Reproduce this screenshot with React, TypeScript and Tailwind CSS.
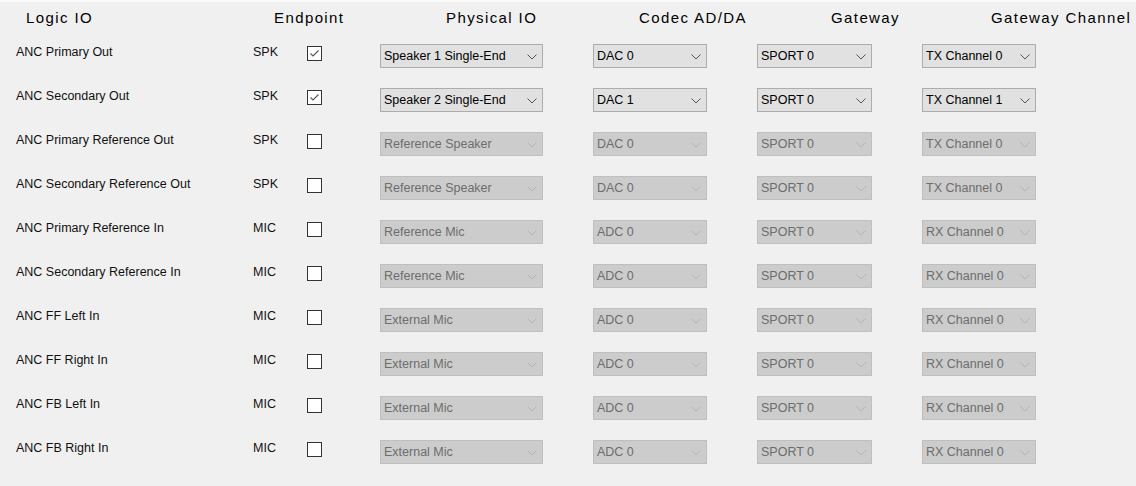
import React from "react";

type Row = {
  name: string;
  ep: string;
  checked: boolean;
  phys: string;
  codec: string;
  gw: string;
  ch: string;
};

const rows: Row[] = [
  { name: "ANC Primary Out", ep: "SPK", checked: true, phys: "Speaker 1 Single-End", codec: "DAC 0", gw: "SPORT 0", ch: "TX Channel 0" },
  { name: "ANC Secondary Out", ep: "SPK", checked: true, phys: "Speaker 2 Single-End", codec: "DAC 1", gw: "SPORT 0", ch: "TX Channel 1" },
  { name: "ANC Primary Reference Out", ep: "SPK", checked: false, phys: "Reference Speaker", codec: "DAC 0", gw: "SPORT 0", ch: "TX Channel 0" },
  { name: "ANC Secondary Reference Out", ep: "SPK", checked: false, phys: "Reference Speaker", codec: "DAC 0", gw: "SPORT 0", ch: "TX Channel 0" },
  { name: "ANC Primary Reference In", ep: "MIC", checked: false, phys: "Reference Mic", codec: "ADC 0", gw: "SPORT 0", ch: "RX Channel 0" },
  { name: "ANC Secondary Reference In", ep: "MIC", checked: false, phys: "Reference Mic", codec: "ADC 0", gw: "SPORT 0", ch: "RX Channel 0" },
  { name: "ANC FF Left In", ep: "MIC", checked: false, phys: "External Mic", codec: "ADC 0", gw: "SPORT 0", ch: "RX Channel 0" },
  { name: "ANC FF Right In", ep: "MIC", checked: false, phys: "External Mic", codec: "ADC 0", gw: "SPORT 0", ch: "RX Channel 0" },
  { name: "ANC FB Left In", ep: "MIC", checked: false, phys: "External Mic", codec: "ADC 0", gw: "SPORT 0", ch: "RX Channel 0" },
  { name: "ANC FB Right In", ep: "MIC", checked: false, phys: "External Mic", codec: "ADC 0", gw: "SPORT 0", ch: "RX Channel 0" },
];

function Chevron({ enabled }: { enabled: boolean }) {
  return (
    <svg width="10" height="6" viewBox="0 0 10 6" className="shrink-0 mt-[1px]">
      <path d="M0.5 0.5 L5 5 L9.5 0.5" fill="none" stroke={enabled ? "#555555" : "#b4b4b4"} strokeWidth="1" />
    </svg>
  );
}

function Select({ value, enabled, w }: { value: string; enabled: boolean; w: string }) {
  return (
    <div
      className={
        "h-[24px] flex items-center justify-between pl-[3px] pr-[5px] border " +
        w +
        (enabled
          ? " bg-[#e1e1e1] border-[#adadad] text-black"
          : " bg-[#cccccc] border-[#bfbfbf] text-[#6d6d6d]")
      }
    >
      <span className="leading-[15px] pt-[1px] whitespace-nowrap">{value}</span>
      <Chevron enabled={enabled} />
    </div>
  );
}

function Checkbox({ checked }: { checked: boolean }) {
  return (
    <div className="w-[15px] h-[15px] border border-[#333333] bg-white flex items-center justify-center mt-[2px]">
      {checked && (
        <svg width="13" height="13" viewBox="0 0 13 13">
          <path d="M2.5 6.5 L5 9 L10.5 3.5" fill="none" stroke="#555555" strokeWidth="1.1" />
        </svg>
      )}
    </div>
  );
}

export default function App() {
  return (
    <div
      className="w-[1136px] h-[486px] bg-[#f0f0f0] border-t-2 border-[#fafafa] pt-[7px] overflow-hidden text-[#111111]"
      style={{ fontFamily: '"Liberation Sans", Arial, sans-serif' }}
    >
      <div className="flex h-[17px] text-[15px] leading-[17px] tracking-[1.4px] text-black whitespace-nowrap">
        <div className="w-[253px] pl-[26px]">Logic IO</div>
        <div className="w-[127px] pl-[21px]">Endpoint</div>
        <div className="w-[213px] pl-[66px]">Physical IO</div>
        <div className="w-[164px] pl-[46px]">Codec AD/DA</div>
        <div className="w-[165px] pl-[74px]">Gateway</div>
        <div className="pl-[69px]">Gateway Channel</div>
      </div>
      <div className="mt-[18px] flex flex-col gap-[20px] text-[12.5px]">
        {rows.map((r, i) => {
          const enabled = r.checked;
          return (
            <div key={i} className="flex h-[24px] items-start">
              <div className="w-[253px] pl-[16px] pt-[1px] leading-[15px] whitespace-nowrap">{r.name}</div>
              <div className="w-[54px] pt-[1px] leading-[15px]">{r.ep}</div>
              <div className="w-[73px]">
                <Checkbox checked={r.checked} />
              </div>
              <div className="w-[213px]">
                <Select value={r.phys} enabled={enabled} w="w-[163px]" />
              </div>
              <div className="w-[164px]">
                <Select value={r.codec} enabled={enabled} w="w-[114px]" />
              </div>
              <div className="w-[165px]">
                <Select value={r.gw} enabled={enabled} w="w-[115px]" />
              </div>
              <div>
                <Select value={r.ch} enabled={enabled} w="w-[114px]" />
              </div>
            </div>
          );
        })}
      </div>
    </div>
  );
}
